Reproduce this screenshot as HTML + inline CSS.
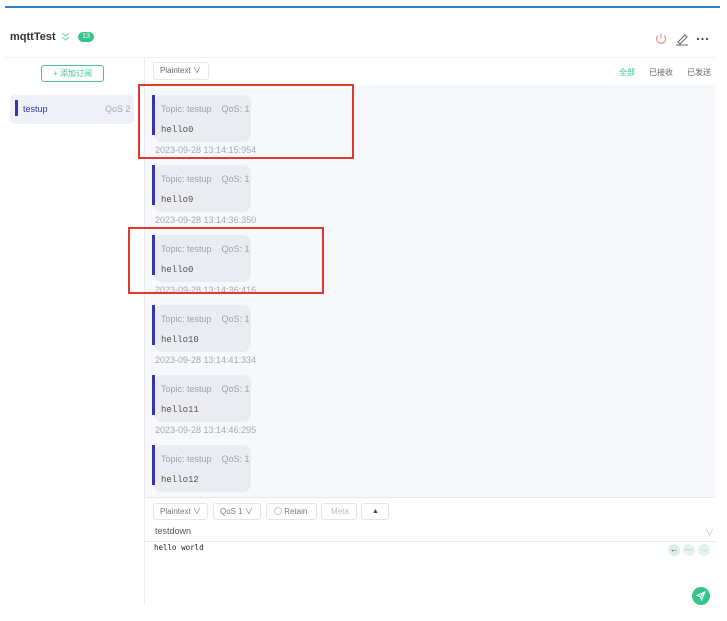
<!DOCTYPE html>
<html><head><meta charset="utf-8"><style>
*{box-sizing:border-box;margin:0;padding:0}
body{width:727px;height:621px;background:#fff;position:relative;overflow:hidden;font-family:"Liberation Sans","Noto Sans CJK SC",sans-serif;}
.a{position:absolute}
.bub{position:absolute;left:154px;width:97px;height:47px;background:#ebecf1;border-radius:8px}
.bar{position:absolute;left:152px;width:3px;height:40px;background:#3636a8}
.tp{position:absolute;left:161px;font-size:9px;color:#a0a4ab;white-space:nowrap}
.hl{position:absolute;left:161px;font-family:"Liberation Mono",monospace;font-size:9px;color:#555}
.dt{position:absolute;left:155px;font-size:9px;color:#a5a9b0}
.btn{position:absolute;top:503px;height:17px;border:1px solid #e3e5e8;border-radius:3px;font-size:8px;color:#777;line-height:15px;padding-left:6px}
</style></head><body>
<div class="a" style="left:5px;top:6px;width:715px;height:2px;background:#2f7fc4"></div>
<div class="a" style="left:10px;top:31px;font-size:11px;font-weight:bold;color:#333">mqttTest</div>
<svg class="a" style="left:60px;top:31px" width="11" height="11" viewBox="0 0 11 11"><path d="M2 2L5.5 5L9 2M2 6L5.5 9L9 6" fill="none" stroke="#7fd3a6" stroke-width="1.1"/></svg>
<div class="a" style="left:78px;top:32px;width:16px;height:10px;border-radius:5px;background:#34c388;color:#fff;font-size:7px;text-align:center;line-height:10px">13</div>
<svg class="a" style="left:654px;top:32px" width="60" height="14" viewBox="0 0 60 14">
<path d="M4 3.5A4.5 4.5 0 1 0 10 3.5" fill="none" stroke="#e88" stroke-width="1.1"/><line x1="7" y1="1.5" x2="7" y2="6.5" stroke="#e88" stroke-width="1.1"/>
<path d="M24 10L31 3L33 5L26 12Z" fill="none" stroke="#666" stroke-width="1"/><line x1="22" y1="13" x2="34" y2="13" stroke="#666"/>
<circle cx="44" cy="7" r="1.1" fill="#444"/><circle cx="48.5" cy="7" r="1.1" fill="#444"/><circle cx="53" cy="7" r="1.1" fill="#444"/>
</svg>
<div class="a" style="left:5px;top:57px;width:710px;height:1px;background:#eef0f2"></div>
<div class="a" style="left:144px;top:58px;width:1px;height:547px;background:#ececef"></div>
<div class="a" style="left:41px;top:65px;width:63px;height:17px;border:1px solid #55c08e;border-radius:3px;font-size:8px;color:#34c388;text-align:center;line-height:15px">+ 添加订阅</div>
<div class="a" style="left:10px;top:95px;width:124px;height:29px;background:#f0f0f8;border-radius:5px"></div>
<div class="a" style="left:15px;top:100px;width:3px;height:16px;background:#3636a8"></div>
<div class="a" style="left:23px;top:104px;font-size:9px;color:#3636a8">testup</div>
<div class="a" style="left:105px;top:104px;font-size:9px;color:#aaa">QoS 2</div>
<div class="a" style="left:153px;top:62px;width:56px;height:18px;border:1px solid #e5e7ea;border-radius:3px;font-size:8px;color:#666;line-height:16px;padding-left:6px">Plaintext &#8744;</div>
<div class="a" style="left:619px;top:67px;font-size:8px;color:#34c388">全部</div>
<div class="a" style="left:649px;top:67px;font-size:8px;color:#666">已接收</div>
<div class="a" style="left:687px;top:67px;font-size:8px;color:#666">已发送</div>
<div class="a" style="left:145px;top:85px;width:570px;height:412px;background:#f7f8fb"></div>
<div class="a" style="left:145px;top:497px;width:570px;height:1px;background:#e6e8eb"></div>

<div class="bub" style="top:95px"></div><div class="bar" style="top:95px"></div><div class="tp" style="top:104px">Topic: testup&nbsp;&nbsp;&nbsp; QoS: 1</div><div class="hl" style="top:125px">hello0</div><div class="dt" style="top:145px">2023-09-28 13:14:15:954</div>
<div class="bub" style="top:165px"></div><div class="bar" style="top:165px"></div><div class="tp" style="top:174px">Topic: testup&nbsp;&nbsp;&nbsp; QoS: 1</div><div class="hl" style="top:195px">hello9</div><div class="dt" style="top:215px">2023-09-28 13:14:36:350</div>
<div class="bub" style="top:235px"></div><div class="bar" style="top:235px"></div><div class="tp" style="top:244px">Topic: testup&nbsp;&nbsp;&nbsp; QoS: 1</div><div class="hl" style="top:265px">hello0</div><div class="dt" style="top:285px">2023-09-28 13:14:36:416</div>
<div class="bub" style="top:305px"></div><div class="bar" style="top:305px"></div><div class="tp" style="top:314px">Topic: testup&nbsp;&nbsp;&nbsp; QoS: 1</div><div class="hl" style="top:335px">hello10</div><div class="dt" style="top:355px">2023-09-28 13:14:41:334</div>
<div class="bub" style="top:375px"></div><div class="bar" style="top:375px"></div><div class="tp" style="top:384px">Topic: testup&nbsp;&nbsp;&nbsp; QoS: 1</div><div class="hl" style="top:405px">hello11</div><div class="dt" style="top:425px">2023-09-28 13:14:46:295</div>
<div class="bub" style="top:445px"></div><div class="bar" style="top:445px"></div><div class="tp" style="top:454px">Topic: testup&nbsp;&nbsp;&nbsp; QoS: 1</div><div class="hl" style="top:475px">hello12</div>

<div class="a" style="left:138px;top:84px;width:216px;height:75px;border:2px solid #e03a30"></div>
<div class="a" style="left:128px;top:227px;width:196px;height:67px;border:2px solid #e03a30"></div>

<div class="btn" style="left:153px;width:55px">Plaintext &#8744;</div>
<div class="btn" style="left:213px;width:48px">QoS 1 &#8744;</div>
<div class="btn" style="left:266px;width:51px;padding-left:7px"><span style="display:inline-block;width:8px;height:8px;border:1px solid #ccc;border-radius:50%;vertical-align:-1px"></span> Retain</div>
<div class="btn" style="left:321px;width:36px;color:#bbb;padding-left:9px">Meta</div>
<div class="btn" style="left:361px;width:28px;padding-left:10px;font-size:7px;color:#444">&#9650;</div>
<div class="a" style="left:155px;top:526px;font-size:9px;color:#555">testdown</div>
<div class="a" style="left:705px;top:526px;font-size:9px;color:#bbb">&#8744;</div>
<div class="a" style="left:145px;top:541px;width:570px;height:1px;background:#e6e8eb"></div>
<div class="a" style="left:154px;top:543px;font-family:'DejaVu Sans Mono',monospace;font-size:7.5px;color:#222">hello world</div>
<div class="a" style="left:668px;top:544px;width:12px;height:12px;border-radius:50%;background:#dfeee8;font-size:8px;text-align:center;line-height:12px;color:#333">&#8592;</div>
<div class="a" style="left:683px;top:544px;width:12px;height:12px;border-radius:50%;background:#e6f2ec;font-size:8px;text-align:center;line-height:12px;color:#bbb">&#8212;</div>
<div class="a" style="left:698px;top:544px;width:12px;height:12px;border-radius:50%;background:#e6f2ec;font-size:8px;text-align:center;line-height:12px;color:#bbb">&#8594;</div>
<div class="a" style="left:692px;top:587px;width:18px;height:18px;border-radius:50%;background:#34c388"></div>
<svg class="a" style="left:696px;top:591px" width="10" height="10" viewBox="0 0 10 10"><path d="M9 1L1 4.5L4.5 5.5L5.5 9Z M9 1L4.5 5.5" fill="none" stroke="#fff" stroke-width="1"/></svg>
</body></html>
